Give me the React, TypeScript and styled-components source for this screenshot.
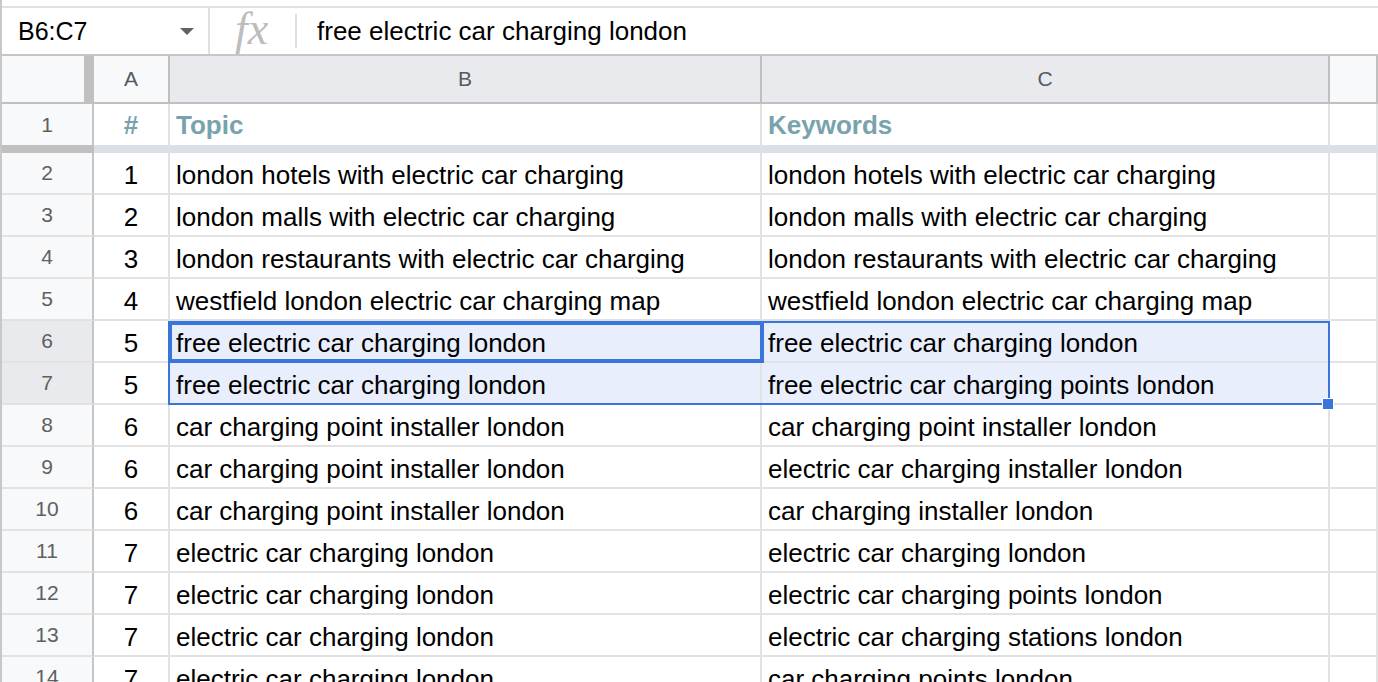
import React from "react";
import styled, { createGlobalStyle } from "styled-components";

const GlobalStyle = createGlobalStyle`
  html, body {
    margin: 0;
    padding: 0;
    background: #ffffff;
    overflow: hidden;
  }
  body {
    font-family: "Liberation Sans", Arial, sans-serif;
    color: #000;
  }
`;

const BLUE = "#3a75dc";

const COLS = [
  { key: "A", width: 76, selected: false },
  { key: "B", width: 592, selected: true },
  { key: "C", width: 568, selected: true },
];

const rows: [string, string, string][] = [
  ["1", "london hotels with electric car charging", "london hotels with electric car charging"],
  ["2", "london malls with electric car charging", "london malls with electric car charging"],
  ["3", "london restaurants with electric car charging", "london restaurants with electric car charging"],
  ["4", "westfield london electric car charging map", "westfield london electric car charging map"],
  ["5", "free electric car charging london", "free electric car charging london"],
  ["5", "free electric car charging london", "free electric car charging points london"],
  ["6", "car charging point installer london", "car charging point installer london"],
  ["6", "car charging point installer london", "electric car charging installer london"],
  ["6", "car charging point installer london", "car charging installer london"],
  ["7", "electric car charging london", "electric car charging london"],
  ["7", "electric car charging london", "electric car charging points london"],
  ["7", "electric car charging london", "electric car charging stations london"],
  ["7", "electric car charging london", "car charging points london"],
];

const Page = styled.div`
  position: relative;
  height: 682px;
  overflow: hidden;
  border-left: 2px solid #c8c8c8;
  padding-top: 6px;
  box-sizing: border-box;
`;

const FormulaBar = styled.div`
  display: flex;
  align-items: center;
  height: 50px;
  box-sizing: border-box;
  border-top: 2px solid #e1e1e1;
  border-bottom: 2px solid #c6c6c6;
`;

const NameBox = styled.div`
  width: 206px;
  box-sizing: border-box;
  padding: 0 14px 0 16px;
  display: flex;
  align-items: center;
  justify-content: space-between;
  font-size: 25px;
`;

const Caret = styled.span`
  width: 0;
  height: 0;
  border-left: 7px solid transparent;
  border-right: 7px solid transparent;
  border-top: 7px solid #5f6368;
`;

const Divider = styled.div<{ $inset?: number }>`
  width: 2px;
  align-self: stretch;
  margin: ${(p) => p.$inset ?? 0}px 0;
  background: #e0e0e0;
`;

const Fx = styled.div`
  width: 85px;
  text-align: center;
  font-family: "Liberation Serif", "Times New Roman", serif;
  font-style: italic;
  font-size: 46px;
  color: #bdbdbd;
  padding-right: 2px;
  box-sizing: border-box;
  line-height: 1;
  margin-top: -4px;
`;

const FormulaText = styled.div`
  padding-left: 20px;
  font-size: 26px;
`;

const HeaderRow = styled.div`
  display: flex;
  height: 48px;
  box-sizing: border-box;
  border-bottom: 2px solid #c0c0c0;
`;

const Corner = styled.div`
  width: 92px;
  flex-shrink: 0;
  box-sizing: border-box;
  background: #f8f9fa;
  border-right: 10px solid #c0c0c0;
`;

const ColHead = styled.div<{ $w?: number; $sel?: boolean }>`
  ${(p) => (p.$w ? `width: ${p.$w}px; flex-shrink: 0;` : "flex: 1;")}
  box-sizing: border-box;
  background: ${(p) => (p.$sel ? "#e8eaed" : "#f8f9fa")};
  border-right: 2px solid #c0c0c0;
  display: flex;
  align-items: center;
  justify-content: center;
  font-size: 21px;
  color: #555a5f;
`;

const Row = styled.div<{ $h: number }>`
  display: flex;
  height: ${(p) => p.$h}px;
`;

const RowHead = styled.div<{ $sel?: boolean; $noBottom?: boolean }>`
  width: 92px;
  flex-shrink: 0;
  box-sizing: border-box;
  background: ${(p) => (p.$sel ? "#e8eaed" : "#f8f9fa")};
  border-right: 2px solid #c6c6c6;
  border-bottom: ${(p) => (p.$noBottom ? "none" : "2px solid #e2e2e2")};
  display: flex;
  align-items: center;
  justify-content: center;
  font-size: 21px;
  color: #606060;
`;

const Cell = styled.div<{
  $w?: number;
  $center?: boolean;
  $sel?: boolean;
  $head?: boolean;
  $noBottom?: boolean;
}>`
  ${(p) => (p.$w ? `width: ${p.$w}px; flex-shrink: 0;` : "flex: 1;")}
  box-sizing: border-box;
  background: ${(p) => (p.$sel ? "#e8eefb" : "#ffffff")};
  border-right: 2px solid #e2e2e2;
  border-bottom: ${(p) => (p.$noBottom ? "none" : "2px solid #e2e2e2")};
  display: flex;
  align-items: flex-end;
  justify-content: ${(p) => (p.$center ? "center" : "flex-start")};
  padding: 0 6px ${(p) => (p.$head ? 5 : 3)}px;
  font-size: 26px;
  line-height: 30px;
  white-space: nowrap;
  overflow: hidden;
  font-weight: ${(p) => (p.$head ? 700 : 400)};
  color: ${(p) => (p.$head ? "#78a3ad" : "#000")};
`;

const FreezeRow = styled.div`
  display: flex;
  height: 8px;
`;

const FreezeHead = styled.div`
  width: 92px;
  flex-shrink: 0;
  background: #c0c0c0;
`;

const FreezeBody = styled.div`
  flex: 1;
  background: #dcdfe7;
`;

const RangeBox = styled.div`
  position: absolute;
  left: 166px;
  top: 321px;
  width: 1162px;
  height: 84px;
  box-sizing: border-box;
  border: 2px solid ${BLUE};
  pointer-events: none;
`;

const ActiveBox = styled.div`
  position: absolute;
  left: 166px;
  top: 321px;
  width: 596px;
  height: 42px;
  box-sizing: border-box;
  border: 4px solid ${BLUE};
  pointer-events: none;
`;

const FillHandle = styled.div`
  position: absolute;
  left: 1320px;
  top: 398px;
  width: 12px;
  height: 12px;
  box-sizing: border-box;
  background: ${BLUE};
  border: 1px solid #ffffff;
`;

export default function App() {
  return (
    <>
      <GlobalStyle />
      <Page>
        <FormulaBar>
          <NameBox>
            <span>B6:C7</span>
            <Caret />
          </NameBox>
          <Divider />
          <Fx>fx</Fx>
          <Divider $inset={6} />
          <FormulaText>free electric car charging london</FormulaText>
        </FormulaBar>

        <HeaderRow>
          <Corner />
          {COLS.map((c) => (
            <ColHead key={c.key} $w={c.width} $sel={c.selected}>
              {c.key}
            </ColHead>
          ))}
          <ColHead />
        </HeaderRow>

        <Row $h={41}>
          <RowHead $noBottom>1</RowHead>
          <Cell $w={76} $center $head $noBottom>
            #
          </Cell>
          <Cell $w={592} $head $noBottom>
            Topic
          </Cell>
          <Cell $w={568} $head $noBottom>
            Keywords
          </Cell>
          <Cell $noBottom />
        </Row>

        <FreezeRow>
          <FreezeHead />
          <FreezeBody />
        </FreezeRow>

        {rows.map((r, i) => {
          const n = i + 2;
          const sel = n === 6 || n === 7;
          return (
            <Row key={n} $h={42}>
              <RowHead $sel={sel}>{n}</RowHead>
              <Cell $w={76} $center>
                {r[0]}
              </Cell>
              <Cell $w={592} $sel={sel}>
                {r[1]}
              </Cell>
              <Cell $w={568} $sel={sel}>
                {r[2]}
              </Cell>
              <Cell />
            </Row>
          );
        })}

        <RangeBox />
        <ActiveBox />
        <FillHandle />
      </Page>
    </>
  );
}
